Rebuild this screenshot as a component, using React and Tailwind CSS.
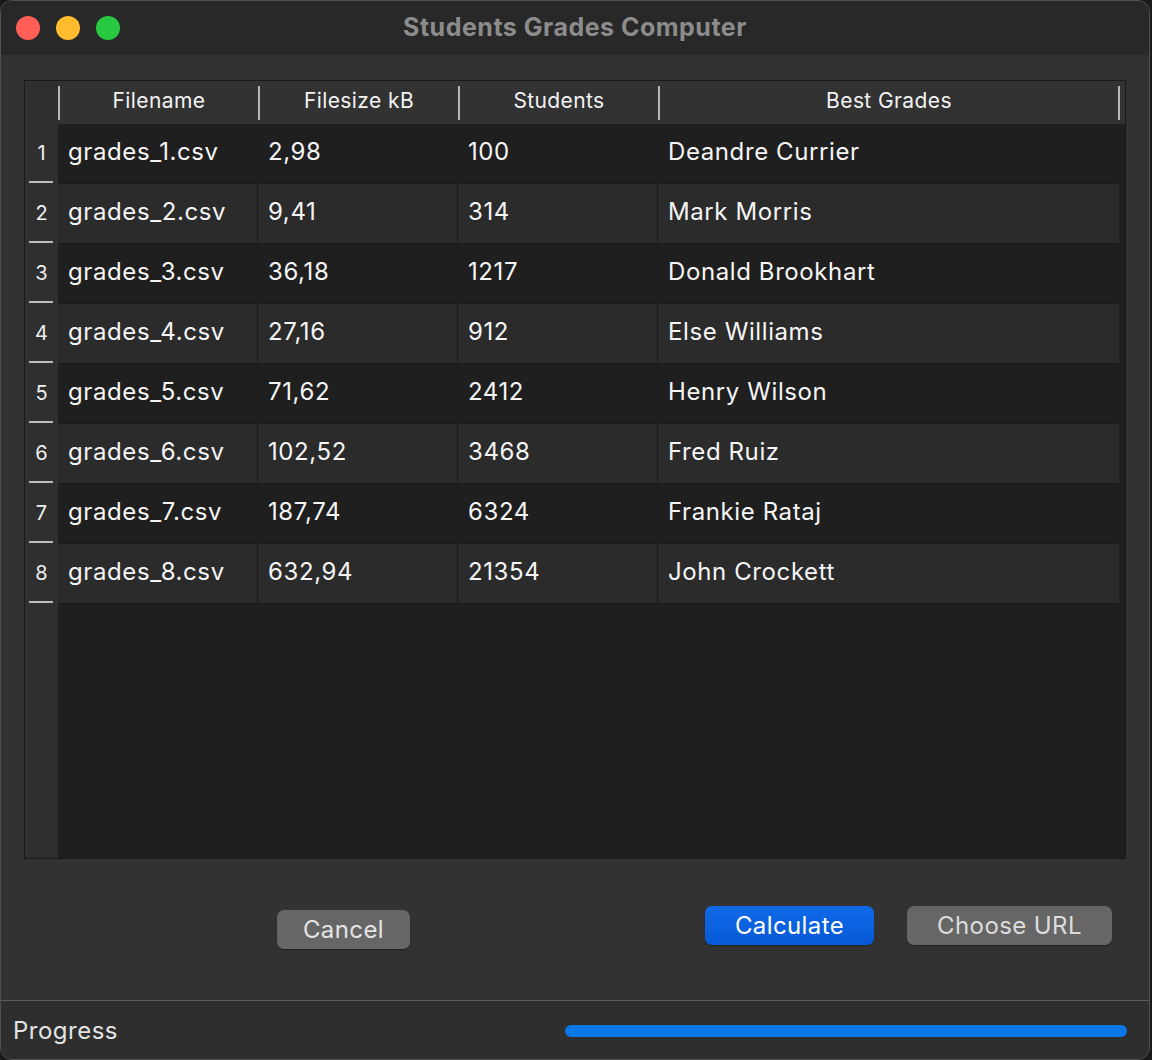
import React from "react";

const rows = [
  ["grades_1.csv", "2,98", "100", "Deandre Currier"],
  ["grades_2.csv", "9,41", "314", "Mark Morris"],
  ["grades_3.csv", "36,18", "1217", "Donald Brookhart"],
  ["grades_4.csv", "27,16", "912", "Else Williams"],
  ["grades_5.csv", "71,62", "2412", "Henry Wilson"],
  ["grades_6.csv", "102,52", "3468", "Fred Ruiz"],
  ["grades_7.csv", "187,74", "6324", "Frankie Rataj"],
  ["grades_8.csv", "632,94", "21354", "John Crockett"],
];

const font = { fontFamily: "Inter, 'Noto Sans', sans-serif" };

export default function App() {
  return (
    <div className="w-[1152px] h-[1060px] bg-[#1a1a1a] overflow-hidden" style={font}>
      <div className="w-[1150px] h-[1060px] rounded-t-[12px] rounded-b-[12px] border border-[#505050] overflow-hidden flex flex-col bg-[#323232]">
        {/* Title bar */}
        <div className="h-[54px] shrink-0 bg-[#282828] flex items-center relative">
          <div className="flex items-center gap-[16px] pl-[15px]">
            <div className="w-[24px] h-[24px] rounded-full bg-[#ff5f57]" />
            <div className="w-[24px] h-[24px] rounded-full bg-[#febc2e]" />
            <div className="w-[24px] h-[24px] rounded-full bg-[#28c840]" />
          </div>
          <div className="absolute inset-0 flex items-center justify-center pointer-events-none">
            <span className="text-[25px] font-bold text-[#8c8c8c] tracking-[0.5px]">Students Grades Computer</span>
          </div>
        </div>

        {/* Content */}
        <div className="flex-1 flex flex-col px-[23px] pt-[25px]">
          <div className="h-[779px] border border-[#191919] bg-[#1f1f1f] flex">
            {/* vertical header */}
            <div className="w-[33px] shrink-0 bg-[#2f2f2f] flex flex-col">
              <div className="h-[43px] shrink-0" />
              {rows.map((_, i) => (
                <div key={i} className="h-[60px] flex flex-col items-center justify-center relative pb-[3px]">
                  <span className="text-[20px] text-[#f0f0f0]">{i + 1}</span>
                  <div className="absolute bottom-[1px] left-[4px] w-[24px] h-[2px] bg-[#bdbdbd]" />
                </div>
              ))}
            </div>
            <div className="flex-1 flex flex-col">
              {/* header */}
              <div className="h-[43px] shrink-0 bg-[#323232] flex items-center pr-[5px]">
                <div className="w-[2px] h-[34px] bg-[#b8b8b8]" />
                {["Filename", "Filesize kB", "Students"].map((h) => (
                  <React.Fragment key={h}>
                    <div className="w-[198px] text-center text-[21px] tracking-[0.4px] text-[#f2f2f2] pb-[3px]">{h}</div>
                    <div className="w-[2px] h-[34px] bg-[#b8b8b8]" />
                  </React.Fragment>
                ))}
                <div className="flex-1 text-center text-[21px] tracking-[0.4px] text-[#f2f2f2] pb-[3px]">Best Grades</div>
                <div className="w-[2px] h-[34px] bg-[#b8b8b8]" />
              </div>
              {rows.map((r, i) => (
                <div
                  key={i}
                  className={`h-[60px] flex mr-[6px] border-b border-[#191919] ${i % 2 === 0 ? "bg-[#1f1f1f]" : "bg-[#2b2b2b]"}`}
                >
                  {r.map((c, j) => (
                    <div
                      key={j}
                      className={`${j < 3 ? "w-[200px] border-r border-[#191919]" : "flex-1"} flex items-center pl-[10px] pb-[3px] text-[24px] tracking-[0.6px] text-[#f5f5f5]`}
                    >
                      {c}
                    </div>
                  ))}
                </div>
              ))}
            </div>
          </div>

          {/* Buttons */}
          <div className="relative h-[141px]">
            <button className="absolute left-[253px] top-[51px] w-[133px] h-[39px] rounded-[7px] bg-[#666666] text-[24px] tracking-[0.4px] text-[#e4e4e4] shadow-[0_1px_1px_rgba(0,0,0,0.3)]">
              Cancel
            </button>
            <button className="absolute left-[681px] top-[47px] w-[169px] h-[39px] rounded-[7px] bg-gradient-to-b from-[#106ae8] to-[#0759d6] text-[24px] tracking-[0.4px] text-white shadow-[0_1px_1px_rgba(0,0,0,0.3)]">
              Calculate
            </button>
            <button className="absolute left-[883px] top-[47px] w-[205px] h-[39px] rounded-[7px] bg-[#666666] text-[24px] tracking-[0.4px] text-[#dcdcdc] shadow-[0_1px_1px_rgba(0,0,0,0.3)]">
              Choose URL
            </button>
          </div>
        </div>

        {/* Bottom bar */}
        <div className="h-[60px] shrink-0 border-t border-[#5c5c5c] bg-[#2e2e2e] flex items-center pl-[12px] pr-[22px]">
          <span className="text-[24px] tracking-[0.5px] text-[#e4e4e4]">Progress</span>
          <div className="flex-1" />
          <div className="w-[562px] h-[12px] rounded-full bg-[#0a78e6]" />
        </div>
      </div>
    </div>
  );
}
